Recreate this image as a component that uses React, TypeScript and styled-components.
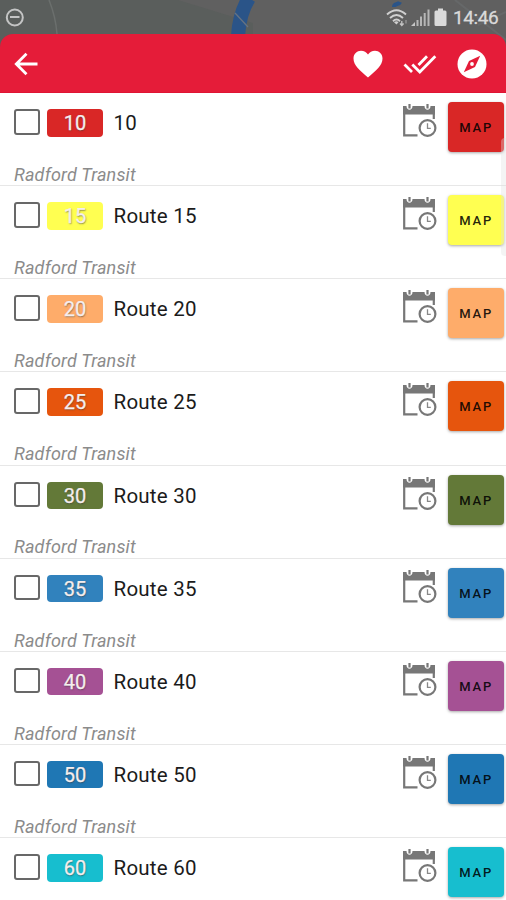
import React from 'react';
import styled, { createGlobalStyle } from 'styled-components';

const GlobalStyle = createGlobalStyle`
  * { box-sizing: border-box; }
  body { margin: 0; background: #fff; font-family: Roboto, sans-serif; }
`;

const Screen = styled.main`
  position: relative;
  width: 506px;
  height: 900px;
  overflow: hidden;
  background: #fff;
`;

const TopArea = styled.div`
  position: relative;
  height: 93px;
  background: #5a5e5c;
`;

const MapBackdrop = styled.svg`
  position: absolute;
  left: 0;
  top: 0;
`;

const StatusBar = styled.div`
  position: relative;
  display: flex;
  align-items: center;
  justify-content: space-between;
  height: 34px;
  padding: 0 7px 0 5px;
`;

const StatusIcons = styled.div`
  display: flex;
  align-items: center;
`;

const Clock = styled.span`
  width: 46px;
  margin-left: 6px;
  padding-top: 2px;
  color: #dadada;
  font-size: 19px;
  line-height: 34px;
  letter-spacing: -0.4px;
  -webkit-text-stroke: 0.3px #dadada;
  white-space: nowrap;
`;

const AppBar = styled.header`
  position: relative;
  display: flex;
  align-items: center;
  height: 59px;
  padding: 1px 19.5px 0 14px;
  border-radius: 13px 13px 0 0;
  border-bottom: 1px solid #df1534;
  background: #e51c39;
`;

const IconButton = styled.button<{ $gap?: string }>`
  display: flex;
  margin: 0 0 0 ${(p) => p.$gap ?? '0'};
  padding: 0;
  border: 0;
  background: none;
`;

const RouteList = styled.ul`
  margin: 0;
  padding: 0;
  list-style: none;
`;

const RouteRow = styled.li`
  display: flex;
  align-items: flex-start;
  height: 93.15px;
  padding: 9px 2.3px 0 14px;
  border-bottom: 1.5px solid #e7e7e7;
`;

const RouteInfo = styled.div`
  flex: 1;
`;

const RouteHeading = styled.div`
  display: flex;
  align-items: flex-start;
  padding-top: 7px;
  height: 62.8px;
`;

const Checkbox = styled.span`
  width: 26px;
  height: 25.5px;
  border: 2px solid #686868;
  border-radius: 3px;
`;

const Badge = styled.span<{ $color: string }>`
  width: 56px;
  height: 27.5px;
  margin: 0 10.5px 0 7px;
  border-radius: 4px;
  background: ${(p) => p.$color};
  color: #f5eeee;
  font-size: 20px;
  line-height: 28px;
  text-align: center;
  text-shadow: 0.5px 0.5px 1.5px rgba(60, 60, 60, 0.6);
  -webkit-text-stroke: 0.25px #f5eeee;
`;

const RouteName = styled.span`
  color: #1b1b1b;
  font-size: 20.5px;
  line-height: 28px;
  letter-spacing: 0.25px;
`;

const Agency = styled.div`
  color: #8b8b8b;
  font-size: 18px;
  font-style: italic;
  font-weight: 400;
  line-height: 20px;
  letter-spacing: 0.18px;
`;

const MapButton = styled.button<{ $color: string }>`
  width: 56px;
  height: 50px;
  margin: 0 0 0 10.7px;
  padding: 2px 0 0 1px;
  border: 0;
  border-radius: 4px;
  background: ${(p) => p.$color};
  box-shadow: 0 1px 3px rgba(0, 0, 0, 0.35);
  color: rgba(0, 0, 0, 0.87);
  font: 500 13px/20px Roboto, sans-serif;
  letter-spacing: 1.8px;
`;

const ScrollThumb = styled.div`
  position: absolute;
  top: 138px;
  right: 0;
  width: 5px;
  height: 118px;
  border-radius: 4px 0 0 4px;
  background: rgba(225, 225, 225, 0.36);
`;

const routes = [
  { id: '10', name: '10', color: '#d92726' },
  { id: '15', name: 'Route 15', color: '#ffff51' },
  { id: '20', name: 'Route 20', color: '#feac6a' },
  { id: '25', name: 'Route 25', color: '#e6550d' },
  { id: '30', name: 'Route 30', color: '#637938' },
  { id: '35', name: 'Route 35', color: '#3182bd' },
  { id: '40', name: 'Route 40', color: '#a55194' },
  { id: '50', name: 'Route 50', color: '#1f77b4' },
  { id: '60', name: 'Route 60', color: '#17becf' },
];

const ScheduleIcon = () => (
  <svg width="35" height="36" viewBox="0 0 35 36" fill="none">
    <path d="M1 4H4.5C4.5 9 10.5 9 10.5 4H22.5C22.5 9 28.5 9 28.5 4H33V12.5H1Z" fill="#777" />
    <path d="M7.5 2V6.5M25.5 2V6.5" stroke="#777" strokeWidth="2.2" />
    <path d="M2.2 11V33.3H15.5M31.8 11V17" stroke="#777" strokeWidth="2.2" />
    <circle cx="25.5" cy="26" r="7.9" stroke="#777" strokeWidth="2.2" />
    <path d="M25.5 21.3V26.3H28.8" stroke="#888" strokeWidth="1.3" />
  </svg>
);

export default function App() {
  return (
    <Screen>
      <GlobalStyle />
      <TopArea>
        <MapBackdrop width="506" height="60" fill="none">
          <path d="M178 0L253 23V60H506V0Z" fill="#606060" />
          <path d="M49 0C53 10 56 20 57 34" stroke="#6b6f6d" strokeWidth="1.5" />
          <path d="M249 -2C242 9 239 20 238 36" stroke="#2a5488" strokeWidth="14" />
          <path d="M235 13L248 27" stroke="#667383" strokeWidth="1.3" />
          <path d="M394 7C394 3 399 5 400 2" stroke="#2a5488" strokeWidth="4" />
          <path d="M455 0L506 40M478 25L506 12" stroke="#666869" strokeWidth="2" />
        </MapBackdrop>
        <StatusBar>
          <svg width="20" height="20" viewBox="0 0 20 20" fill="none" stroke="#c4c5c5" strokeWidth="2">
            <circle cx="9.8" cy="10.5" r="8" />
            <path d="M5 10H14.5" />
          </svg>
          <StatusIcons>
            <svg width="61" height="22" viewBox="0 0 61 22" fill="none">
              <g stroke="#d0d0d0" strokeWidth="1.9">
                <path d="M1 8.5Q10.5 0 20 8.5" />
                <path d="M4 12Q10.5 6 17 12" />
                <path d="M7 15.2Q10.5 12 14 15.2" />
              </g>
              <path d="M8 16.2Q10.5 14.5 12.5 16.2L10.5 18.5Z" fill="#d0d0d0" />
              <path d="M15.8 15V19.5M14 17.5L15.8 19.5L17.6 17.5" stroke="#c4c4c4" strokeWidth="1.3" />
              <path d="M20 14V17.5" stroke="#8d8d8d" strokeWidth="1.6" />
              <path d="M25 20L29 16V20Z" fill="#c6c6c6" />
              <path d="M31.5 20V14M35 20V10.5M38.7 20V7M42.5 20V3.5" stroke="#b6b6b6" strokeWidth="2" />
              <path d="M52 2.5H57V4.5H59Q60.5 4.5 60.5 6V18.5Q60.5 20 59 20H50Q48.5 20 48.5 18.5V6Q48.5 4.5 50 4.5H52Z" fill="#dadada" />
            </svg>
            <Clock>14:46</Clock>
          </StatusIcons>
        </StatusBar>
        <AppBar>
          <IconButton aria-label="Back">
            <svg width="25" height="24" viewBox="0 0 25 24" fill="none" stroke="#fff" strokeWidth="2.8">
              <path d="M23.5 12H2.5M12.5 1.8L2.3 12L12.5 22.2" />
            </svg>
          </IconButton>
          <IconButton aria-label="Favorites" $gap="auto">
            <svg width="30" height="28" viewBox="0 0 30 28" fill="#fff">
              <path d="M15 27.5C7 20.5 .5 15.5 .5 8.5C.5 4 4 .8 8 .8C11 .8 13.5 2.3 15 4.5C16.5 2.3 19 .8 22 .8C26 .8 29.5 4 29.5 8.5C29.5 15.5 23 20.5 15 27.5Z" />
            </svg>
          </IconButton>
          <IconButton aria-label="Select all" $gap="20px">
            <svg width="34" height="22" viewBox="0 0 34 22" fill="none" stroke="#fff" strokeWidth="2.8">
              <path d="M1.5 11.5L9 19M9.3 11.5L16.8 19L32.3 3.3M15.5 12L24 3.3" />
            </svg>
          </IconButton>
          <IconButton aria-label="Explore" $gap="20px">
            <svg width="30" height="30" viewBox="0 0 30 30">
              <circle cx="15" cy="15" r="14.5" fill="#fff" />
              <path d="M6.8 23.2L12 12L23.2 6.8L18 18Z" fill="#e51c39" />
              <circle cx="15" cy="15" r="1.9" fill="#fff" />
            </svg>
          </IconButton>
        </AppBar>
      </TopArea>
      <RouteList>
        {routes.map((route, index) => (
          <RouteRow key={route.id}>
            <RouteInfo>
              <RouteHeading>
                <Checkbox role="checkbox" aria-checked="false" />
                <Badge $color={route.color}>{route.id}</Badge>
                <RouteName>{route.name}</RouteName>
              </RouteHeading>
              {index < routes.length - 1 && <Agency>Radford Transit</Agency>}
            </RouteInfo>
            <ScheduleIcon />
            <MapButton $color={route.color}>MAP</MapButton>
          </RouteRow>
        ))}
      </RouteList>
      <ScrollThumb />
    </Screen>
  );
}
